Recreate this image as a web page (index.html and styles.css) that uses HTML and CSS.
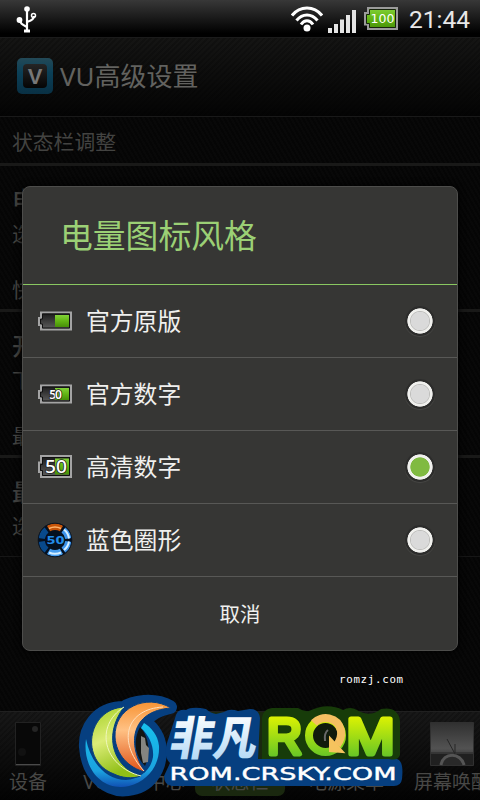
FILE: index.html
```html
<!DOCTYPE html>
<html lang="zh-CN">
<head>
  <meta charset="UTF-8">
  <meta name="viewport" content="width=device-width, initial-scale=1.0">
  <title>VU高级设置</title>
  <link rel="stylesheet" href="styles.css">
</head>
<body>
  <div class="phone">
    <!-- Status bar -->
    <header class="status-bar">
      <svg class="usb-icon" width="22" height="28" viewBox="0 0 22 28" fill="none" stroke="#fff" stroke-width="2.2">
        <path d="M11 4V26M3.500 14C4 19 7 20 11 22M18 11C18 15 14 16 11 17"/>
        <circle cx="11" cy="4" r="2.800" fill="#fff" stroke="none"/>
        <circle cx="3.500" cy="15" r="2.900" fill="#fff" stroke="none"/>
        <circle cx="17.500" cy="10.500" r="2" stroke-width="1.500"/>
        <path d="M8 26h6" stroke-width="3"/>
      </svg>
      <div class="status-icons">
        <svg class="wifi-icon" width="32" height="26" viewBox="0 0 32 26" fill="none" stroke="#fff" stroke-width="3">
          <path d="M1 9.500C9 -.5 23 -.5 31 9.500M5.500 14.500C11.500 7 20.500 7 26.500 14.500M10 18.500C13.500 13.500 18.500 13.500 22 18.500"/>
          <circle cx="16" cy="22" r="3.500" fill="#fff" stroke="none"/>
        </svg>
        <svg class="signal-icon" width="28" height="23" viewBox="0 0 28 23" fill="#e4e4e4">
          <path d="M0 18h4v5H0zM6 14h4v9H6zM12 9.500h4V23h-4zM18 5h4v18h-4zM24 0h4v23h-4z"/>
        </svg>
        <svg class="battery-icon" width="34" height="23" viewBox="0 0 34 23">
          <path d="M4 1H33V22H4V17.500H1V6H4z" fill="url(#green)" stroke="#9b9b9b" stroke-width="2"/>
          <path d="M5.500 2.500h26v18h-26v-4h-3v-9h3z" fill="none" stroke="#17230d"/>
          <text class="battery-number" x="18.500" y="16" textLength="24">100</text>
        </svg>
        <span class="clock">21:44</span>
      </div>
    </header>

    <div class="title-bar">
      <div class="app-icon">
        <div><span>V</span></div>
      </div>
      <h1>VU高级设置</h1>
    </div>

    <!-- Settings page behind the dialog -->
    <main class="settings">
      <h2 class="section first">状态栏调整</h2>
      <div class="setting">
        <strong>电</strong>
        <span>选</span>
      </div>
      <h2 class="section">快</h2>
      <div class="setting">
        <strong>开</strong>
        <span>下</span>
      </div>
      <h2 class="section">最</h2>
      <div class="setting last">
        <strong>最</strong>
        <span>选</span>
      </div>
    </main>

    <nav class="tabs">
      <div class="tab">
        <svg width="26" height="44" viewBox="0 0 26 44">
          <path d="M.5.500h25v43H.500z" fill="#080808" stroke="#222"/>
          <path d="M1 42.500h24" stroke="#4a4a4a"/>
          <circle cx="20" cy="7" r="3" fill="#242424"/>
          <circle cx="7" cy="30" r="4" fill="#111"/>
        </svg>
        <span>设备</span>
      </div>
      <div class="tab">
        <svg width="44" height="44"></svg>
        <span>VU控制中心</span>
      </div>
      <div class="tab active">
        <svg width="44" height="44"></svg>
        <span>状态栏</span>
      </div>
      <div class="tab">
        <svg width="44" height="44"></svg>
        <span>电源菜单</span>
      </div>
      <div class="tab">
        <svg width="44" height="44" viewBox="0 0 44 44">
          <path d="M.5.500h43v43H.500z" fill="url(#photo)" stroke="#303030"/>
          <path d="M1 32h42v11H1z" fill="#202020"/>
          <path d="M11 43C13 30 31 30 34 43" fill="#292929" stroke="#555" stroke-width="3"/>
          <path d="M17 17l8 15M25 22v9M1 31h42" fill="none" stroke="#262626"/>
        </svg>
        <span>屏幕唤醒</span>
      </div>
    </nav>

    <!-- Battery style dialog -->
    <div class="dialog">
      <h3>电量图标风格</h3>
      <label class="option">
        <svg width="36" height="36" viewBox="0 0 36 36">
          <path d="M4 9.500H34V26.500H4V22H2V15H4z" fill="url(#dark)" stroke="#a4a4a4" stroke-width="2"/>
          <path d="M5.500 11h27v14h-27v-4h-2v-5h2z" fill="none" stroke="#111"/>
          <path d="M18 12h14v12H18z" fill="url(#green)"/>
        </svg>
        <span>官方原版</span>
        <i class="radio"></i>
      </label>
      <label class="option">
        <svg width="36" height="36" viewBox="0 0 36 36">
          <path d="M4 9.500H34V26.500H4V22H2V15H4z" fill="url(#dark)" stroke="#a4a4a4" stroke-width="2"/>
          <path d="M5.500 11h27v14h-27v-4h-2v-5h2z" fill="none" stroke="#111"/>
          <path d="M18 12h14v12H18z" fill="url(#green)"/>
          <text class="fifty small" x="18.500" y="22.500" textLength="12.500">50</text>
        </svg>
        <span>官方数字</span>
        <i class="radio"></i>
      </label>
      <label class="option">
        <svg width="36" height="36" viewBox="0 0 36 36">
          <path d="M4 7H34V28H4V23H2V13.500H4z" fill="url(#dark)" stroke="#a4a4a4" stroke-width="2"/>
          <path d="M5.500 8.500h27v18h-27v-5h-2v-6h2z" fill="none" stroke="#111"/>
          <path d="M18 9.500h14v16H18z" fill="url(#green)"/>
          <text class="fifty" x="19" y="24" textLength="22" lengthAdjust="spacingAndGlyphs">50</text>
        </svg>
        <span>高清数字</span>
        <i class="radio checked"></i>
      </label>
      <label class="option">
        <svg width="36" height="36" viewBox="0 0 36 36" fill="none">
          <circle cx="18" cy="18" r="17" fill="#051020"/>
          <g stroke-width="6.500">
            <path d="M11.500 6.500A13 13 0 0 1 24.500 6.500" stroke="#c75408"/>
            <path d="M26.500 7.800A13 13 0 0 1 31.500 16.500M31.500 19.500A13 13 0 0 1 26.500 28.200" stroke="#3d94ec"/>
            <path d="M24.500 29.500A13 13 0 0 1 11.500 29.500" stroke="#479eef"/>
            <path d="M9.500 28.200A13 13 0 0 1 4.500 19.500M4.500 16.500A13 13 0 0 1 9.500 7.800" stroke="#08498c"/>
          </g>
          <path d="M12 6.500Q18 3.500 24 6.500" stroke="#ffb36b" stroke-width="1.500"/>
          <path d="M27 7.500A14 14 0 0 1 32 16.500M32 19.500A14 14 0 0 1 27 28M24 30.500Q18 33 12 30.500" stroke="#d4eeff" stroke-width="2"/>
          <circle cx="18" cy="18" r="16.800" stroke="#0b1420"/>
          <text class="ring-number" x="18.500" y="22" textLength="18" lengthAdjust="spacingAndGlyphs">50</text>
        </svg>
        <span>蓝色圈形</span>
        <i class="radio"></i>
      </label>
      <button class="cancel">取消</button>
    </div>

    <p class="site-mark">romzj.com</p>

    <!-- Site logo -->
    <svg class="logo" width="330" height="110" viewBox="75 690 330 110">
      <defs>
        <linearGradient id="green" x2="0" y2="1">
          <stop offset="0" stop-color="#83d238"/><stop offset=".5" stop-color="#62b514"/><stop offset="1" stop-color="#478f08"/>
        </linearGradient>
        <linearGradient id="dark" x2="0" y2="1">
          <stop offset="0" stop-color="#171717"/><stop offset="1" stop-color="#606060"/>
        </linearGradient>
        <linearGradient id="photo" x2="0" y2="1">
          <stop offset="0" stop-color="#303030"/><stop offset=".6" stop-color="#525252"/><stop offset="1" stop-color="#222"/>
        </linearGradient>
        <linearGradient id="lime" x2=".3" y2="1">
          <stop offset="0" stop-color="#a4cf24"/><stop offset=".5" stop-color="#dced78"/><stop offset="1" stop-color="#91bf17"/>
        </linearGradient>
        <linearGradient id="orange" x2="0" y2="1">
          <stop offset="0" stop-color="#f79435"/><stop offset=".4" stop-color="#ffc184"/><stop offset="1" stop-color="#df5318"/>
        </linearGradient>
        <linearGradient id="cyan" x2="0" y2="1">
          <stop offset="0" stop-color="#17c0ed"/><stop offset=".75" stop-color="#1ba2df"/><stop offset="1" stop-color="#1051b4"/>
        </linearGradient>
        <linearGradient id="rom" gradientUnits="userSpaceOnUse" x1="0" y1="714" x2="0" y2="758">
          <stop offset="0" stop-color="#e4f500"/><stop offset="1" stop-color="#62c527"/>
        </linearGradient>
        <linearGradient id="ice" gradientUnits="userSpaceOnUse" x1="0" y1="-42" x2="0" y2="4">
          <stop offset="0" stop-color="#fff"/><stop offset="1" stop-color="#b5daf6"/>
        </linearGradient>
      </defs>
      <path d="M124 708C96 708 85 730 86 747C88 776 108 792 128 789C149 787 160 770 160 750C159 737 153 728 144 722C148 716 155 710 170 707C154 698 132 702 124 708z" fill="#063f80" stroke="#063f80" stroke-width="14" stroke-linejoin="round"/>
      <path d="M140 727C133 740 134 755 145 766C151 754 149 736 140 727z" fill="#131513"/>
      <path d="M141 736l4 2 1 7 3 3-1 14-5 1-2-10z" fill="#858581"/>
      <path d="M86 739C82 769 103 792 129 786C148 781 160 765 159 746C158 735 151 727 144 723L141 728C149 735 154 746 153 757C151 770 140 779 126 780C107 780 91 764 86 739z" fill="url(#cyan)"/>
      <path d="M124 707C87 709 79 761 114 774C122 778 132 779 141 776C116 769 101 738 124 707z" fill="url(#lime)" stroke="#063f80"/>
      <path d="M124 707C94 726 103 766 141 776" fill="none" stroke="#f0f7bd"/>
      <path d="M171 708C146 693 114 708 115 737C116 755 129 768 145 772C127 745 130 711 171 708z" fill="url(#orange)" stroke="#063f80"/>
      <path d="M163 707C127 709 116 740 144 771" fill="none" stroke="#ffe0bd"/>
      <path d="M176 715Q178 709 186 710Q192 706 206 709Q210 713 216 714L224 712Q230 708 238 711L250 709Q259 709 260 718L258 759H397Q404 761 402 779Q401 786 394 786H172Q164 785 164 776L170 763Q163 757 167 743z" fill="#063f80"/>
      <path d="M262 718Q263 709 272 708H298Q304 712 309 711Q327 702 343 710Q350 706 357 710Q370 718 381 709Q398 706 400 721V755Q398 761 389 759H262z" fill="#173c09"/>
      <text class="logo-cn" transform="translate(168 755) skewX(-10)" textLength="87" lengthAdjust="spacingAndGlyphs">非凡</text>
      <text class="logo-rom" x="267" y="753.500" textLength="35" lengthAdjust="spacingAndGlyphs">R</text>
      <text class="logo-rom" x="346.500" y="753.500" textLength="48" lengthAdjust="spacingAndGlyphs">M</text>
      <circle cx="325.500" cy="735.500" r="16.500" fill="#111b0c" stroke="url(#rom)" stroke-width="8"/>
      <path d="M314 723C321 715 338 716 341 731Q342 738 337 745" fill="none" stroke="#f5bf61" stroke-width="8"/>
      <path d="M330 738L343 752L330 751z" fill="#f5c35e" stroke="#f5c35e" stroke-width="2"/>
      <path d="M328 730Q324 733 325 741" fill="none" stroke="#686868" stroke-width="2"/>
      <text class="logo-url" x="169.500" y="779.500" textLength="227" lengthAdjust="spacingAndGlyphs">ROM.CRSKY.COM</text>
    </svg>
  </div>
</body>
</html>
```
FILE: styles.css
```css
* {
  box-sizing: border-box;
}

body {
  margin: 0;
  background: #060606;
  font-family: "Noto Sans", "Noto Sans CJK SC", sans-serif;
}

h1, h2, h3, p {
  margin: 0;
  font-weight: 400;
}

.phone {
  position: relative;
  width: 480px;
  height: 800px;
  overflow: hidden;
  display: flex;
  flex-direction: column;
  background: repeating-linear-gradient(60deg, #080808 0 2px, #050505 2px 4px);
}

.status-bar {
  height: 38px;
  flex: none;
  display: flex;
  justify-content: space-between;
  align-items: flex-start;
  padding: 5px 9px 0 16px;
  background: linear-gradient(#383838, #000 90%);
  border-bottom: 1px solid #1b1b1b;
}

.status-icons {
  display: flex;
}

.wifi-icon {
  margin: 1px 5px 0 0;
}

.signal-icon {
  margin: 5px 8px 0 0;
}

.battery-icon {
  margin: 2px 11px 0 0;
}

.battery-number {
  font: 12.5px "DejaVu Sans", sans-serif;
  fill: #fff;
  text-anchor: middle;
}

.clock {
  width: 62px;
  font: 24.5px/30px Roboto, sans-serif;
  color: #e8e8e8;
}

.title-bar {
  height: 79px;
  flex: none;
  display: flex;
  align-items: center;
  gap: 7px;
  padding: 0 17px 2px;
  background: repeating-linear-gradient(135deg, transparent 0 2px, rgba(0, 0, 0, 0.2) 2px 4px), linear-gradient(#151514, #040404);
  border-bottom: 1px solid #191919;
}

.app-icon {
  width: 36px;
  height: 36px;
  padding: 6px;
  border-radius: 5px;
  background: linear-gradient(#234957, #0b4057 40%, #093044);
}

.app-icon div {
  height: 24px;
  border-radius: 4px;
  background: linear-gradient(#252525, #050505);
  color: #777;
  font: bold 22px/26px "Liberation Sans", sans-serif;
  text-align: center;
}

.title-bar h1 {
  font-size: 26px;
  line-height: 36px;
  color: #62625f;
}

.settings {
  flex: 1;
}

.section {
  height: 38px;
  padding-left: 12px;
  font-size: 20.8px;
  line-height: 32px;
  color: #434341;
  border-bottom: 3px solid #191918;
}

.section.first {
  height: 49px;
  line-height: 50px;
}

.setting {
  height: 108px;
  padding: 16px 0 0 12px;
  font-size: 20px;
  line-height: 34px;
  color: #41413f;
}

.setting strong,
.setting span {
  display: block;
}

.setting strong {
  font-size: 24px;
  font-weight: 500;
  line-height: 36px;
}

.setting.last {
  height: 99px;
  border-bottom: 1px solid #161616;
}

.tabs {
  height: 89px;
  flex: none;
  display: flex;
  margin-left: -25px;
  background: repeating-linear-gradient(135deg, transparent 0 2px, rgba(0, 0, 0, 0.2) 2px 4px), linear-gradient(#181818, #030303);
  border-top: 1px solid #202020;
}

.tab {
  width: 106px;
  height: 84px;
  flex: none;
  display: flex;
  flex-direction: column;
  align-items: center;
  padding-top: 10px;
  font-size: 19px;
  line-height: 32px;
  color: #484846;
  white-space: nowrap;
}

.tab svg {
  flex: none;
}

.tab.active {
  width: 90px;
  margin: 0 8px;
  background: #1a280f;
  border-radius: 0 0 7px 7px;
}

.dialog {
  position: absolute;
  top: 186px;
  left: 22px;
  width: 436px;
  height: 465px;
  background: #363634;
  border: 1px solid #4d4d4b;
  border-radius: 8px;
  box-shadow: 0 0 7px #000;
}

.dialog h3 {
  height: 98px;
  padding-left: 37px;
  font-size: 32.8px;
  line-height: 98px;
  color: #9bd075;
  border-bottom: 1px solid #8ac861;
}

.option {
  height: 73px;
  display: flex;
  align-items: center;
  padding: 0 22px 0 14px;
  color: #f0f0ee;
  border-bottom: 1px solid #585856;
}

.option span {
  flex: 1;
  padding-left: 13px;
  font-size: 23.8px;
  line-height: 40px;
}

.fifty {
  font: 500 18px "Noto Sans", sans-serif;
  fill: #fff;
  stroke: #222;
  stroke-width: 1.5px;
  paint-order: stroke;
  text-anchor: middle;
}

.fifty.small {
  font-size: 12px;
  font-weight: 600;
}

.ring-number {
  font: bold 11px "DejaVu Sans", sans-serif;
  fill: #238ce9;
  text-anchor: middle;
}

.radio {
  width: 30px;
  height: 30px;
  border: 1px solid #2c2c2b;
  border-radius: 50%;
  background: radial-gradient(circle, #dadada 0 9px, #bdbdbb 9.5px, #f0f0ed 10.5px 12.3px, #2c2c2b 13px);
  box-shadow: 0 1px 1px #484846;
}

.radio.checked {
  background: radial-gradient(circle, #80ba41 0 9.3px, #f0f0ed 10px 12.3px, #2c2c2b 13px);
}

.cancel {
  width: 100%;
  height: 73px;
  padding: 0;
  border: 0;
  background: none;
  color: #f0f0ee;
  font: 20.5px/73px "Noto Sans CJK SC", sans-serif;
}

.site-mark {
  position: absolute;
  top: 672px;
  left: 339px;
  color: #fff;
  font: 10.8px/16px "DejaVu Sans Mono", monospace;
  letter-spacing: 0.7px;
}

.logo {
  position: absolute;
  top: 690px;
  left: 75px;
}

.logo-cn {
  font: 900 46px "Noto Sans CJK SC", sans-serif;
  fill: url(#ice);
}

.logo-rom {
  font: 50px "Liberation Sans", sans-serif;
  fill: url(#rom);
  stroke: url(#rom);
  stroke-width: 5px;
  stroke-linejoin: round;
}

.logo-url {
  font: 17.5px "DejaVu Sans", sans-serif;
  fill: #fff;
  stroke: #fff;
  stroke-width: 0.4px;
}
```
